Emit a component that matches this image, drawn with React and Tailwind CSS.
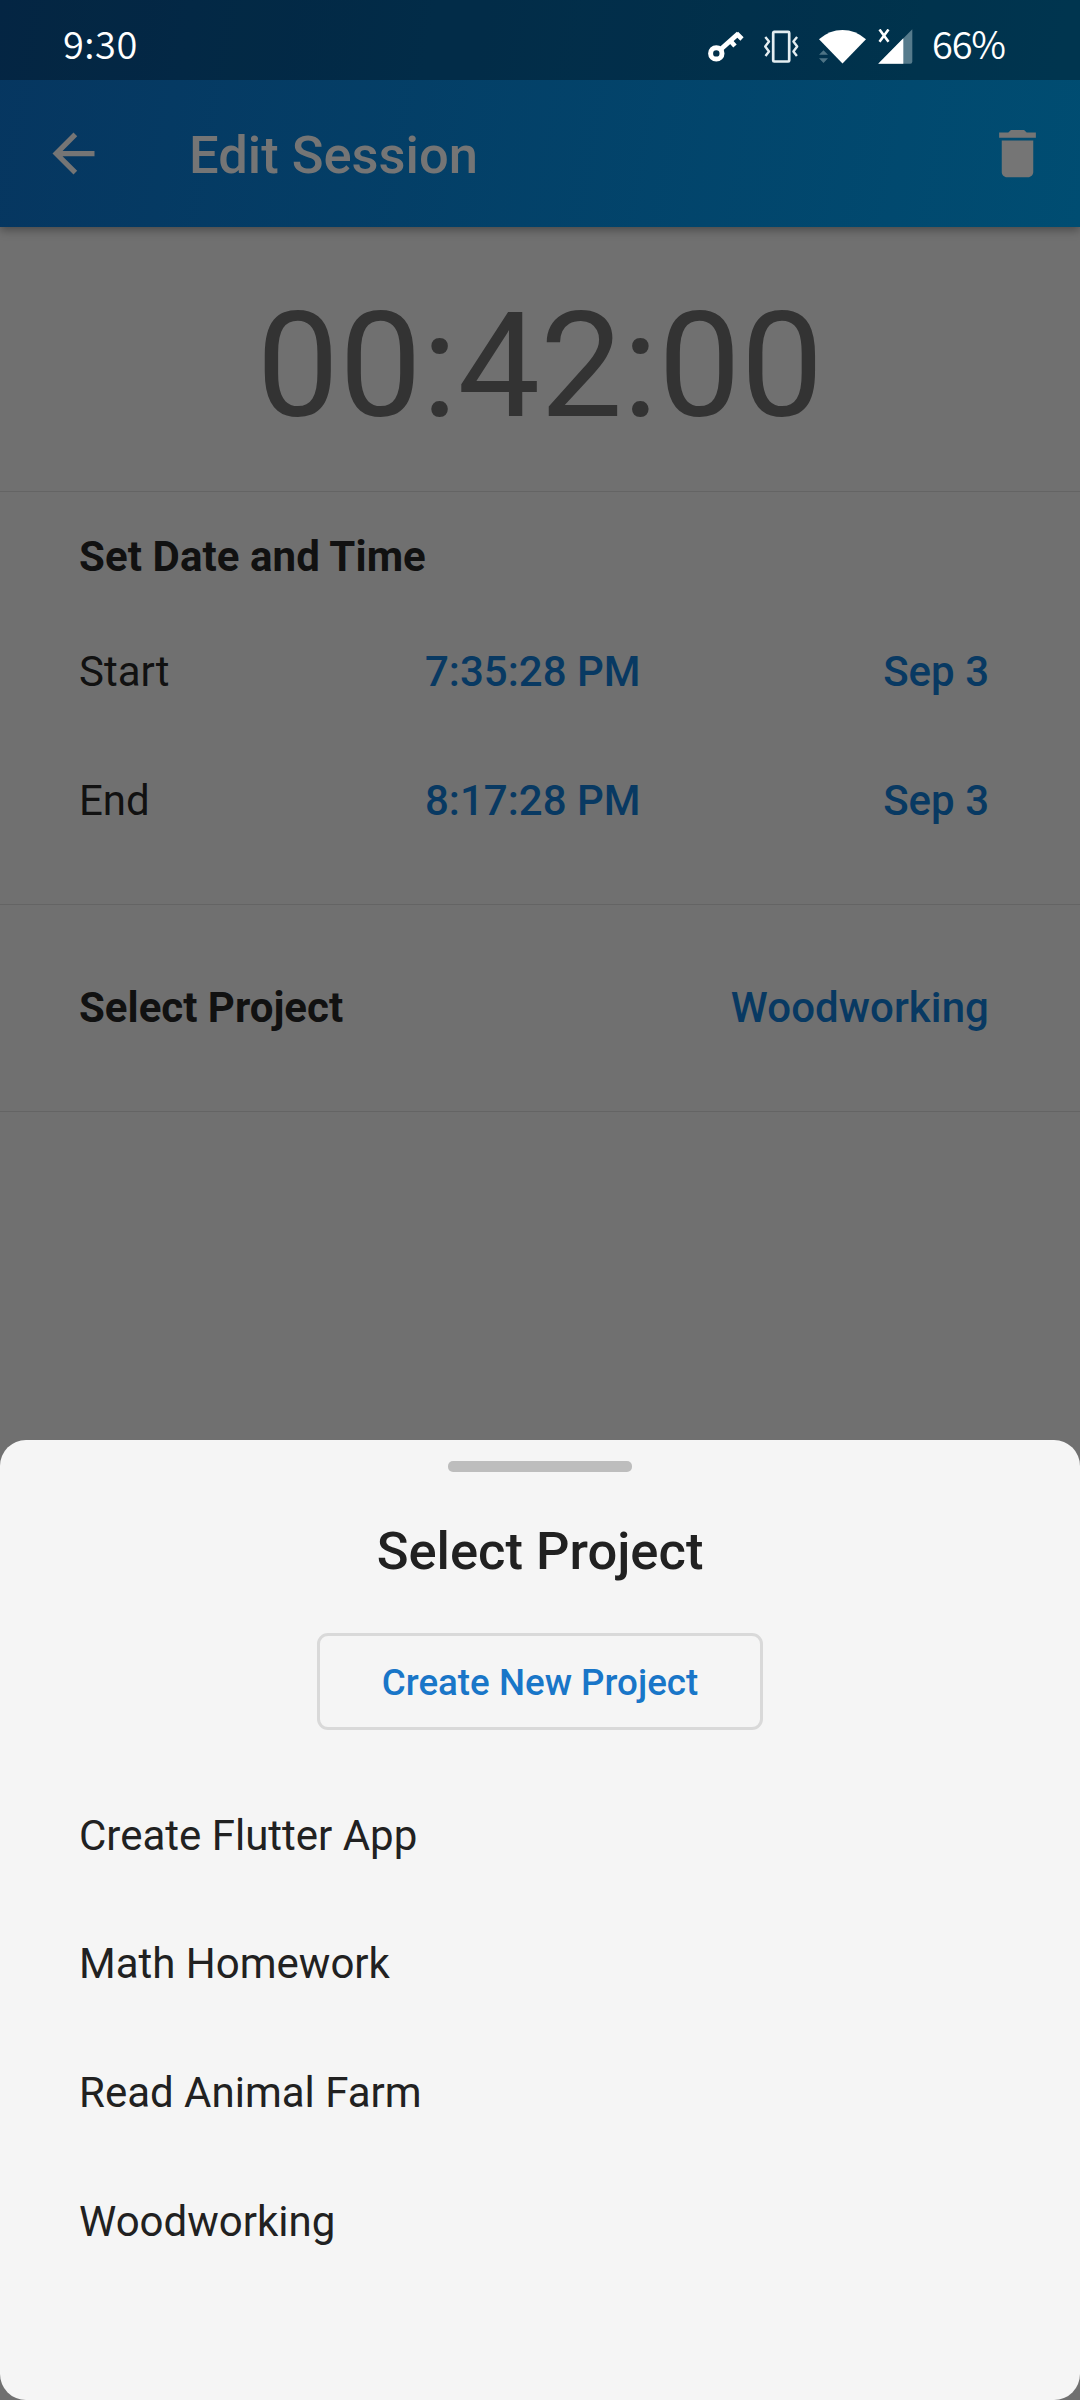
const Divider = () => <div className="h-px shrink-0 bg-[#646464]" />;

const VpnKey = () => (
  <svg className="h-[36px] w-[40px]" viewBox="0 0 40 36" fill="none" stroke="#fff" strokeWidth="5">
    <circle cx="10.3" cy="23.4" r="5.7" />
    <path d="M14.500 19.500L32.500 3.500" />
    <path d="M24 10.500l5 5.500M30.500 3.500l5.500 5.500" strokeWidth="4.600" />
  </svg>
);

const Vibrate = () => (
  <svg className="h-[36px] w-[36px]" viewBox="0 0 36 36" fill="none" stroke="#e4edf1" strokeWidth="2.4" strokeLinejoin="round">
    <rect x="10.2" y="1.9" width="16" height="29.600" rx="1" strokeWidth="2.700" />
    <path d="M2.300 7l3.700 4.500-3.800 5 3.800 5-3.500 4.500" />
    <path d="M34.100 7l-3.700 4.500 3.800 5-3.800 5 3.500 4.500" />
  </svg>
);

const Wifi = () => (
  <svg className="h-[36px] w-[48px]" viewBox="0 0 48 36">
    <path d="M1 10.300Q11.500 1 24.500 1T48 10.300L24.500 34.500z" fill="#fff" />
    <path d="M1 25.800h9l-4.500-4.600zM1 29.300h9l-4.500 4.600z" fill="#4d7385" />
  </svg>
);

const Signal = () => (
  <svg className="h-[37px] w-[36px]" viewBox="0 0 36 37">
    <path d="M35.300 0.300V32.700q0 2-2 2H1.200z" fill="#567b8c" />
    <path d="M26.300 9.300v25.400H1.200z" fill="#fff" />
    <path d="M2.500 0.500L11.500 12.700M11.500 0.500L2.500 12.700" stroke="#fff" strokeWidth="2.600" />
  </svg>
);

const StatusBar = () => (
  <div className="flex h-[80px] shrink-0 bg-black/30 pt-[3px] pl-[63px] font-['Noto_Sans_CJK_SC',sans-serif] text-[38px] leading-[80px] font-[350] text-white">
    <span className="w-[643px] tracking-[0.500px]">9:30</span>
    <div className="flex items-start pt-[26px]">
      <div className="pt-px"><VpnKey /></div>
      <div className="ml-[17px] pt-px"><Vibrate /></div>
      <div className="ml-[19px]"><Wifi /></div>
      <div className="ml-[11px]"><Signal /></div>
    </div>
    <span className="ml-[19px] tracking-[-1.200px]">66%</span>
  </div>
);

const AppBar = () => (
  <header className="relative shrink-0 bg-linear-[100deg] from-[#063660] to-[#004d72] shadow-[0_3px_9px_rgba(0,0,0,0.35)]">
    <StatusBar />
    <div className="flex h-[147px] items-center">
      <svg className="ml-[42px] h-[63px] w-[63px]" viewBox="0 0 24 24" fill="#757575">
        <path d="M20 11H7.830l5.590-5.590L12 4l-8 8 8 8 1.410-1.410L7.830 13H20v-2z" />
      </svg>
      <h1 className="ml-[84px] pt-[2px] text-[52.500px] font-medium text-[#757575]">Edit Session</h1>
      <svg className="mr-[31.500px] ml-auto h-[63px] w-[63px]" viewBox="0 0 24 24" fill="#757575">
        <path d="M6 19c0 1.100.9 2 2 2h8c1.100 0 2-.9 2-2V7H6v12zM19 4h-3.500l-1-1h-5l-1 1H5v2h14V4z" />
      </svg>
    </div>
  </header>
);

const TimeRow = ({ label, time, date }) => (
  <div className="flex h-[129px] items-center pr-[91px] pl-[79px]">
    <span className="w-[346px] text-[#111]">{label}</span>
    <span className="font-medium text-[#083962]">{time}</span>
    <span className="ml-auto font-medium text-[#083962]">{date}</span>
  </div>
);

const projects = ["Create Flutter App", "Math Homework", "Read Animal Farm", "Woodworking"];

const ProjectSheet = () => (
  <section className="flex h-[960px] shrink-0 flex-col items-center rounded-[26px] bg-[#f5f5f5] text-[#212121]">
    <div className="mt-[21px] h-[10.500px] w-[184px] rounded-[5px] bg-[#bdbdbd]" />
    <h2 className="mt-[48.500px] text-[52.500px] leading-[62px] font-medium">Select Project</h2>
    <button className="mt-[51px] h-[97px] w-[446px] rounded-[11px] border-[3px] border-[#d9d9d9] pt-[2px] text-[36.750px] font-medium text-[#1976c8]">
      Create New Project
    </button>
    <ul className="mt-[41.300px] w-full">
      {projects.map((name) => (
        <li key={name} className="flex h-[128.750px] items-center pl-[79px]">{name}</li>
      ))}
    </ul>
  </section>
);

export default function App() {
  return (
    <main className="flex h-[2400px] w-[1080px] flex-col overflow-hidden bg-[#707070] font-[Roboto,sans-serif] text-[42px] leading-[50px]">
      <AppBar />
      <div className="flex h-[264px] shrink-0 items-center justify-center pt-[13px] text-[147px] leading-[172px] text-[#333]">00:42:00</div>
      <Divider />
      <div className="h-[412px] shrink-0 pt-[40px]">
        <h2 className="pl-[79px] font-bold tracking-[0.080px] text-[#111]">Set Date and Time</h2>
        <div className="pt-[25px]">
          <TimeRow label="Start" time="7:35:28 PM" date="Sep 3" />
          <TimeRow label="End" time="8:17:28 PM" date="Sep 3" />
        </div>
      </div>
      <Divider />
      <div className="flex h-[206px] shrink-0 items-center justify-between pr-[91px] pb-px pl-[79px]">
        <h2 className="font-bold text-[#111]">Select Project</h2>
        <span className="font-medium tracking-[0.080px] text-[#083962]">Woodworking</span>
      </div>
      <Divider />
      <div className="grow" />
      <ProjectSheet />
    </main>
  );
}
